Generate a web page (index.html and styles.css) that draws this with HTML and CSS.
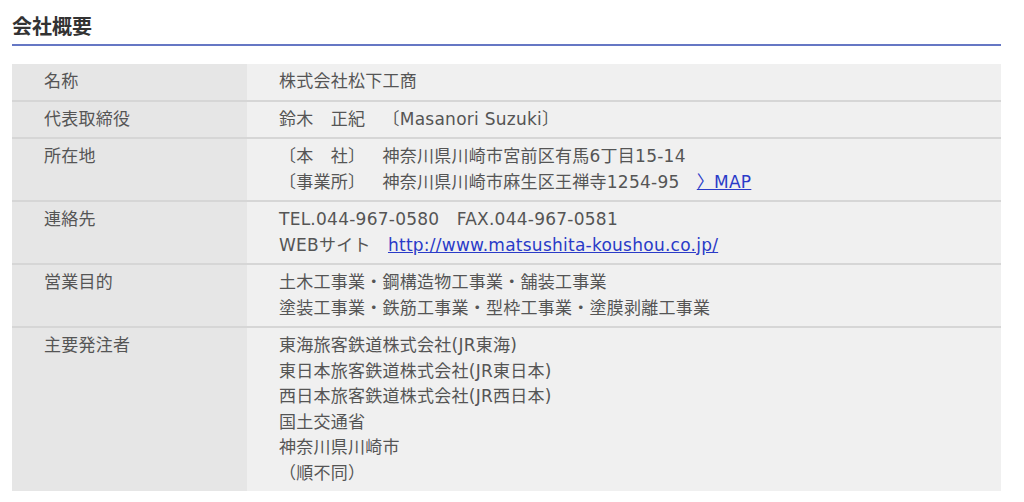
FILE: index.html
```html
<!DOCTYPE html>
<html lang="ja">
<head>
    <meta charset="UTF-8">
    <title>会社概要</title>
    <link rel="stylesheet" href="styles.css">
</head>
<body>
<div class="wrap">
    <h2 class="ttl">会社概要</h2>
    <table class="outline">
        <tr>
            <th>名称</th>
            <td>株式会社松下工商</td>
        </tr>
        <tr>
            <th>代表取締役</th>
            <td>鈴木　正紀　〔Masanori Suzuki〕</td>
        </tr>
        <tr>
            <th>所在地</th>
            <td>〔本　社〕　神奈川県川崎市宮前区有馬6丁目15-14<br>〔事業所〕　神奈川県川崎市麻生区王禅寺1254-95　<a href="#">〉MAP</a></td>
        </tr>
        <tr>
            <th>連絡先</th>
            <td>TEL.044-967-0580　FAX.044-967-0581<br>WEBサイト　<a href="#">http://www.matsushita-koushou.co.jp/</a></td>
        </tr>
        <tr>
            <th>営業目的</th>
            <td>土木工事業・鋼構造物工事業・舗装工事業<br>塗装工事業・鉄筋工事業・型枠工事業・塗膜剥離工事業</td>
        </tr>
        <tr>
            <th>主要発注者</th>
            <td>東海旅客鉄道株式会社(JR東海)<br>東日本旅客鉄道株式会社(JR東日本)<br>西日本旅客鉄道株式会社(JR西日本)<br>国土交通省<br>神奈川県川崎市<br>（順不同）</td>
        </tr>
    </table>
</div>
</body>
</html>
```

FILE: styles.css
```css
body { margin: 0; background: #fff; font-family: "DejaVu Sans", "Noto Sans CJK JP", sans-serif; color: #555; }
.wrap { padding: 10px 23px 0 12px; }
.ttl {
    margin: 0;
    padding: 4px 0 6px;
    font-family: "Noto Sans CJK JP", sans-serif;
    font-size: 20px;
    font-weight: bold;
    color: #333;
    line-height: 24px;
    border-bottom: 2px solid #6577c4;
}
.outline {
    width: 100%;
    margin-top: 18px;
    border-collapse: collapse;
    font-size: 17px;
    line-height: 1.5;
    letter-spacing: 0.25px;
    text-spacing-trim: space-all;
}
.outline th,
.outline td {
    padding: 5px 32px;
    text-align: left;
    vertical-align: top;
    font-weight: normal;
    border-top: 2px solid #d6d6d6;
}
.outline tr:first-child th,
.outline tr:first-child td { border-top: none; }
.outline th { width: 171px; background: #e6e6e6; }
.outline td { background: #f0f0f0; }
.outline a { color: #2a3bc8; }
```
